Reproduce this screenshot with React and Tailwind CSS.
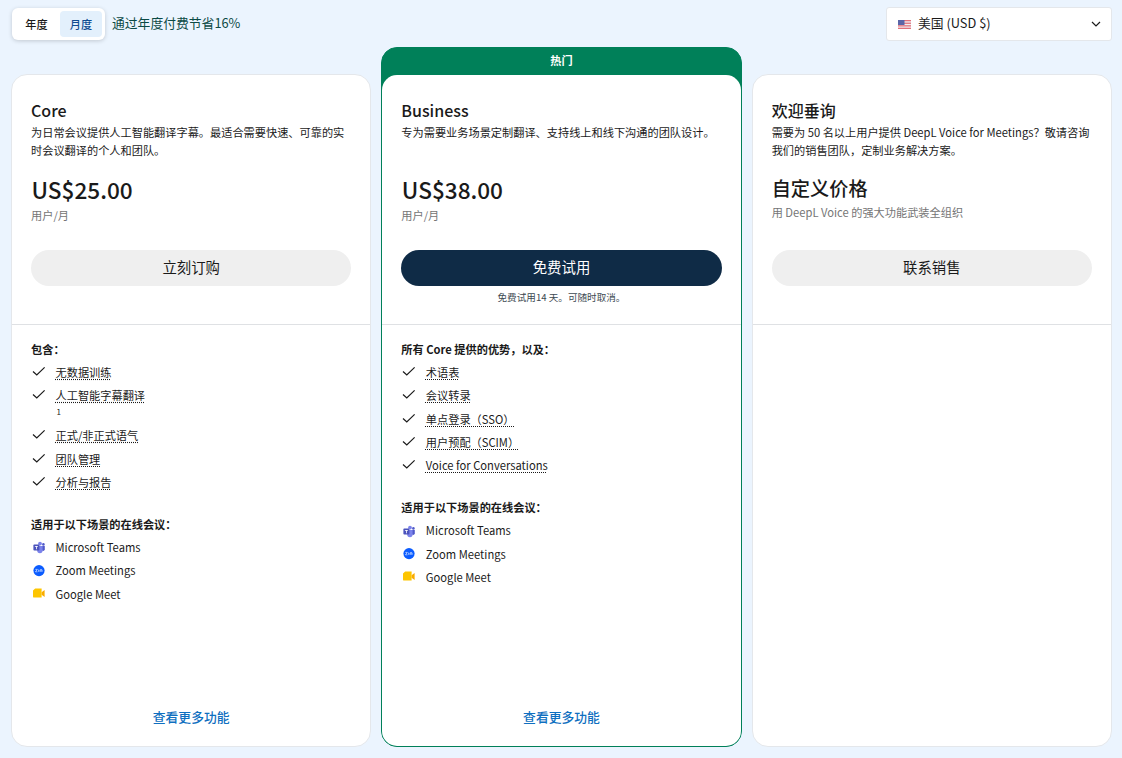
import React from "react";

const font = { fontFamily: '"Noto Sans CJK SC", sans-serif' };

const Check = () => (
  <svg width="16" height="16" viewBox="0 0 16 16" fill="none" className="shrink-0">
    <path d="M2 7.5 L5.8 11 L13.6 3.4" stroke="#1a1a1a" strokeWidth="1.2" />
  </svg>
);

const TeamsIcon = () => (
  <svg width="14" height="14" viewBox="0 0 14 14" className="shrink-0">
    <circle cx="8" cy="3.6" r="1.9" fill="#7b83eb" />
    <circle cx="11.4" cy="4.4" r="1.3" fill="#5059c9" />
    <path d="M9.5 6h3.3v3.6a1.7 1.7 0 0 1-3.3 0z" fill="#5059c9" />
    <path d="M5 6h5.6v4.6a2.7 2.7 0 0 1-5.4 0z" fill="#7b83eb" />
    <rect x="1.4" y="4.6" width="6" height="6" rx="0.8" fill="#4b53bc" />
    <path d="M2.9 6h3v.8H4.8v2.5h-.8V6.8H2.9z" fill="#fff" />
  </svg>
);

const ZoomIcon = () => (
  <svg width="14" height="14" viewBox="0 0 14 14" className="shrink-0">
    <circle cx="7" cy="6.6" r="5.6" fill="#0b5cff" />
    <path d="M3.4 5.4h1.9L3.5 7.8h2M6.6 7.8V5.6M8 7.8V6c0-.5 1-.5 1 0v1.8M9 6c0-.5 1.1-.5 1.1 0v1.8" fill="none" stroke="#fff" strokeWidth="0.6" />
  </svg>
);

const MeetIcon = () => (
  <svg width="14" height="14" viewBox="0 0 14 14" className="shrink-0">
    <path d="M1 3.4 3.2 1.6h6.4v9H2.2A1.2 1.2 0 0 1 1 9.4z" fill="#fdc500" />
    <path d="M9.6 5.2 12.6 3v7L9.6 7.8z" fill="#f9ab00" />
  </svg>
);

const Flag = () => (
  <svg width="13" height="9" viewBox="0 0 13 9" className="shrink-0">
    <rect width="13" height="9" fill="#f1f1f4" />
    <rect y="0" width="13" height="1.3" fill="#e2707b" />
    <rect y="2.6" width="13" height="1.3" fill="#e2707b" />
    <rect y="5.2" width="13" height="1.3" fill="#e2707b" />
    <rect y="7.7" width="13" height="1.3" fill="#e2707b" />
    <rect width="6.5" height="5" fill="#5a66a8" />
  </svg>
);

const Feature = ({ text, note }) => (
  <li className="flex gap-[8.5px]">
    <Check />
    <div className="text-[11.2px] leading-[16.3px] text-[#1a1a1a]">
      <div className="underline decoration-dotted underline-offset-2">{text}</div>
      {note && <div className="text-[8px] leading-[16.7px] pl-[1px]">{note}</div>}
    </div>
  </li>
);

const Platforms = ({ title }) => (
  <div className="mt-[26px]">
    <div className="text-[11.2px] leading-[16px] font-bold text-[#1a1a1a]">{title}</div>
    <ul className="mt-[7px] flex flex-col gap-[7px]">
      <li className="flex items-center gap-[9.5px] h-[16.3px] pl-[1px] text-[11.2px] text-[#1a1a1a]"><TeamsIcon />Microsoft Teams</li>
      <li className="flex items-center gap-[9.5px] h-[16.3px] pl-[1px] text-[11.2px] text-[#1a1a1a]"><ZoomIcon />Zoom Meetings</li>
      <li className="flex items-center gap-[9.5px] h-[16.3px] pl-[1px] text-[11.2px] text-[#1a1a1a]"><MeetIcon />Google Meet</li>
    </ul>
  </div>
);

const Intro = ({ title, desc }) => (
  <>
    <h2 className="text-[16px] leading-[20px] font-medium text-[#1a1a1a]">{title}</h2>
    <p className="mt-[4px] text-[11.2px] leading-[17.5px] text-[#1a1a1a] h-[35px]">{desc}</p>
  </>
);

const Price = ({ amount }) => (
  <>
    <div className="mt-[14px] mb-[1px] pl-[0.5px] text-[22.6px] leading-[34px] font-medium text-[#1a1a1a]">{amount}</div>
    <div className="text-[11.2px] leading-[14px] text-[#757575]">用户/月</div>
  </>
);

const Button = ({ label, dark }) => (
  <button className={`block w-full h-[36px] pb-[2px] rounded-full text-[14.4px] ${dark ? "bg-[#0f2b46] text-white" : "bg-[#efefef] text-[#1a1a1a]"}`}>
    {label}
  </button>
);

const MoreLink = () => (
  <div className="mt-auto pb-[21px] text-center text-[12.8px] leading-[16px] font-medium text-[#0f6fc0]">查看更多功能</div>
);

const App = () => {
  return (
    <div style={font} className="w-[1122px] h-[758px] overflow-hidden bg-[#ebf4fe] pl-[11px] pr-[10px] pt-[7px]">
      <div className="flex justify-between h-[40px]">
        <div className="flex items-center gap-[7px] pl-[1px]">
          <div className="flex h-[32px] w-[93px] items-center bg-white rounded-[6px] p-[3px] shadow-[0_1px_4px_rgba(0,0,0,0.18)] -mt-[7px]">
            <span className="w-[45px] pr-[2px] pt-[1px] text-center text-[11.2px] font-medium text-[#1a1a1a]">年度</span>
            <span className="w-[42px] h-[26px] leading-[27px] text-center text-[11.2px] font-medium rounded-[4px] bg-[#e3f0fc] text-[#0f4c91]">月度</span>
          </div>
          <span className="text-[12.8px] text-[#0b4a45] -mt-[8px]">通过年度付费节省16%</span>
        </div>
        <div className="flex items-center w-[226px] h-[34px] bg-white rounded-[3px] border border-[#e4e7eb] pl-[11px] pr-[10px]">
          <Flag />
          <span className="ml-[7px] -mt-[2px] text-[12.8px] text-[#1a1a1a]">美国 (USD $)</span>
          <svg width="10" height="6" viewBox="0 0 10 6" fill="none" className="ml-auto -mt-[1px]">
            <path d="M1 1 L5 5 L9 1" stroke="#1a1a1a" strokeWidth="1.2" />
          </svg>
        </div>
      </div>

      <div className="grid grid-cols-3 gap-[10px] mt-[27px] h-[673px]">
        <section className="flex flex-col bg-white rounded-[16px] border border-[#e4e7eb]">
          <div className="h-[250px] px-[19px] pt-[25px] border-b border-[#dfe1e4]">
            <Intro title="Core" desc="为日常会议提供人工智能翻译字幕。最适合需要快速、可靠的实时会议翻译的个人和团队。" />
            <Price amount="US$25.00" />
            <div className="mt-[28px]"><Button label="立刻订购" /></div>
          </div>
          <div className="flex-1 flex flex-col px-[19px] pt-[16px]">
            <div className="text-[11.2px] leading-[16px] font-bold text-[#1a1a1a]">包含：</div>
            <ul className="mt-[7px] flex flex-col gap-[7px]">
              <Feature text="无数据训练" />
              <Feature text="人工智能字幕翻译" note="1" />
              <Feature text="正式/非正式语气" />
              <Feature text="团队管理" />
              <Feature text="分析与报告" />
            </ul>
            <Platforms title="适用于以下场景的在线会议：" />
            <MoreLink />
          </div>
        </section>

        <section className="-mt-[27px] flex flex-col bg-[#008059] rounded-[16px] border border-[#008059]">
          <div className="h-[27px] leading-[25px] text-center text-[11.2px] font-bold text-white">热门</div>
          <div className="flex-1 flex flex-col bg-white rounded-[15px]">
            <div className="h-[250px] px-[19px] pt-[25px] border-b border-[#dfe1e4]">
              <Intro title="Business" desc="专为需要业务场景定制翻译、支持线上和线下沟通的团队设计。" />
              <Price amount="US$38.00" />
              <div className="mt-[28px]"><Button label="免费试用" dark /></div>
              <div className="mt-[4px] text-center text-[9.6px] leading-[14px] text-[#3d4a52]">免费试用14 天。可随时取消。</div>
            </div>
            <div className="flex-1 flex flex-col px-[19px] pt-[16px]">
              <div className="text-[11.2px] leading-[16px] font-bold text-[#1a1a1a]">所有 Core 提供的优势，以及：</div>
              <ul className="mt-[7px] flex flex-col gap-[7px]">
                <Feature text="术语表" />
                <Feature text="会议转录" />
                <Feature text="单点登录（SSO）" />
                <Feature text="用户预配（SCIM）" />
                <Feature text="Voice for Conversations" />
              </ul>
              <Platforms title="适用于以下场景的在线会议：" />
              <MoreLink />
            </div>
          </div>
        </section>

        <section className="flex flex-col bg-white rounded-[16px] border border-[#e4e7eb]">
          <div className="h-[250px] px-[19px] pt-[25px] border-b border-[#dfe1e4]">
            <Intro title="欢迎垂询" desc="需要为 50 名以上用户提供 DeepL Voice for Meetings？敬请咨询我们的销售团队，定制业务解决方案。" />
            <div className="mt-[15px] text-[19.2px] leading-[28px] font-medium text-[#1a1a1a]">自定义价格</div>
            <div className="mt-[1.5px] text-[11.2px] leading-[16px] text-[#757575]">用 DeepL Voice 的强大功能武装全组织</div>
            <div className="mt-[30.5px]"><Button label="联系销售" /></div>
          </div>
        </section>
      </div>
    </div>
  );
};

export default App;
